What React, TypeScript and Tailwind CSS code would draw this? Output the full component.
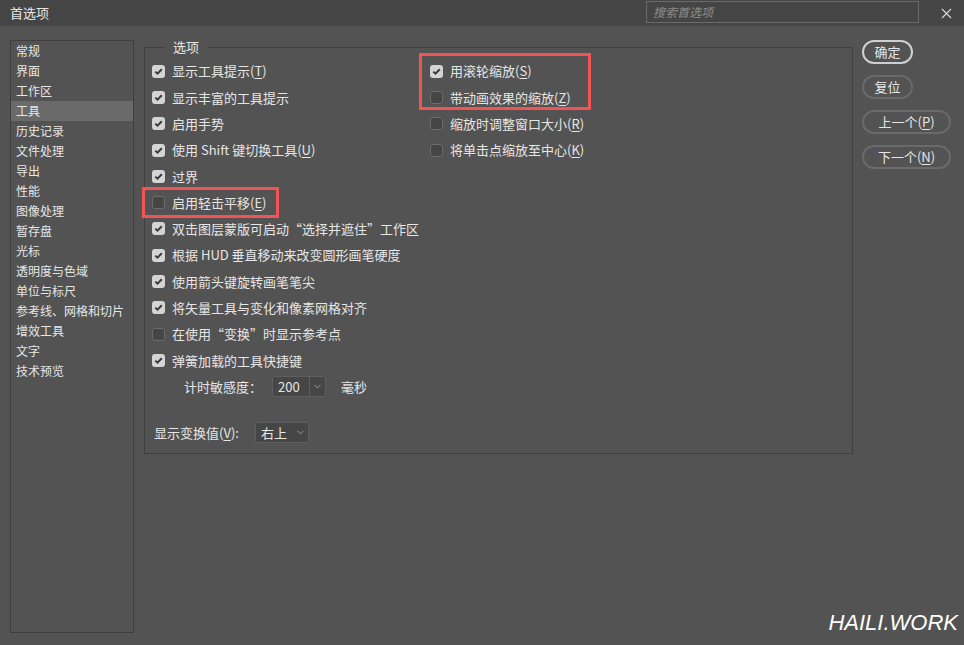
import { X, ChevronDown } from "lucide-react";

const sideItems = [
  "常规",
  "界面",
  "工作区",
  "工具",
  "历史记录",
  "文件处理",
  "导出",
  "性能",
  "图像处理",
  "暂存盘",
  "光标",
  "透明度与色域",
  "单位与标尺",
  "参考线、网格和切片",
  "增效工具",
  "文字",
  "技术预览",
];

type Opt = { label: string; key?: string; on: boolean; mark?: boolean };

const leftOpts: Opt[] = [
  { label: "显示工具提示", key: "T", on: true },
  { label: "显示丰富的工具提示", on: true },
  { label: "启用手势", on: true },
  { label: "使用 Shift 键切换工具", key: "U", on: true },
  { label: "过界", on: true },
  { label: "启用轻击平移", key: "E", on: false, mark: true },
  { label: "双击图层蒙版可启动“选择并遮住”工作区", on: true },
  { label: "根据 HUD 垂直移动来改变圆形画笔硬度", on: true },
  { label: "使用箭头键旋转画笔笔尖", on: true },
  { label: "将矢量工具与变化和像素网格对齐", on: true },
  { label: "在使用“变换”时显示参考点", on: false },
  { label: "弹簧加载的工具快捷键", on: true },
];

const rightOpts: Opt[] = [
  { label: "用滚轮缩放", key: "S", on: true },
  { label: "带动画效果的缩放", key: "Z", on: false },
  { label: "缩放时调整窗口大小", key: "R", on: false },
  { label: "将单击点缩放至中心", key: "K", on: false },
];

function Box({ on }: { on: boolean }) {
  if (on)
    return (
      <span className="flex items-center justify-center w-[13px] h-[13px] rounded-[3px] bg-[#d4d4d4] shrink-0">
        <svg width="9" height="9" viewBox="0 0 9 9">
          <path d="M1.3 4.6 L3.5 6.7 L7.8 2.2" stroke="#3a3a3a" strokeWidth="2" fill="none" />
        </svg>
      </span>
    );
  return <span className="w-[13px] h-[13px] rounded-[3px] bg-[#454545] border border-[#6c6c6c] shrink-0" />;
}

function Key({ k }: { k?: string }) {
  if (!k) return null;
  return (
    <span>
      (<span className="underline underline-offset-2">{k}</span>)
    </span>
  );
}

function Row({ o }: { o: Opt }) {
  return (
    <div className="relative flex items-center gap-[7px] h-[26.3px]">
      <Box on={o.on} />
      <span className="whitespace-nowrap">
        {o.label}
        <Key k={o.key} />
      </span>
      {o.mark && (
        <div className="absolute left-[-10px] top-[-2px] w-[137px] h-[31px] border-[3px] border-[#f25454]" />
      )}
    </div>
  );
}

function Drop({ value, w, split }: { value: string; w: string; split?: boolean }) {
  return (
    <div className={`flex items-center h-[21px] ${w} bg-[#464646] border border-[#5e5e5e] rounded-[2px]`}>
      <span className="flex-1 pl-[5px] leading-none">{value}</span>
      {split && <span className="w-px h-full bg-[#5e5e5e]" />}
      <span className="w-[15px] flex justify-center">
        <ChevronDown size={11} strokeWidth={1.6} className="text-[#b8b8b8]" />
      </span>
    </div>
  );
}

export default function App() {
  return (
    <div
      className="relative w-[964px] h-[645px] overflow-hidden bg-[#535353] text-[#e6e6e6] text-[13px]"
      style={{ fontFamily: '"Noto Sans CJK SC", "Noto Sans", sans-serif' }}
    >
      <div className="flex items-center h-[26px] bg-[#454545] pl-[10px] pr-[9px]">
        <span className="flex-1 text-[13px]">首选项</span>
        <div className="flex items-center w-[273px] h-[22px] border border-[#6a6a6a] pl-[6px] mt-[-2px]">
          <span className="italic text-[12px] text-[#8d8d8d]">搜索首选项</span>
        </div>
        <X size={17} strokeWidth={1.6} className="ml-[19px] text-[#dcdcdc]" />
      </div>

      <div className="flex pt-[14px] pl-[10px]">
        <div className="w-[124px] h-[593px] border border-[#3e3e3e] text-[12px]">
          {sideItems.map((s) => (
            <div
              key={s}
              className={`h-[20px] pl-[5px] flex items-center ${s === "工具" ? "bg-[#6a6a6a]" : ""}`}
            >
              {s}
            </div>
          ))}
        </div>

        <fieldset className="ml-[10px] w-[709px] h-[414px] border border-[#3f3f3f] pl-[7px] pt-[4px]">
          <legend className="ml-[13px] px-[8px] leading-[14px]">选项</legend>
          <div className="flex">
            <div className="w-[278px]">
              {leftOpts.map((o) => (
                <Row key={o.label} o={o} />
              ))}
              <div className="flex items-center h-[26.3px] pl-[32px]">
                <span className="w-[88px]">计时敏感度：</span>
                <Drop value="200" w="w-[54px]" split />
                <span className="ml-[15px]">毫秒</span>
              </div>
            </div>
            <div className="relative">
              {rightOpts.map((o) => (
                <Row key={o.label} o={o} />
              ))}
              <div className="absolute left-[-11px] top-[-5px] w-[172px] h-[57px] border-[3px] border-[#f25454]" />
            </div>
          </div>
          <div className="flex items-center mt-[22px] h-[22px] pl-[2px]">
            <span className="w-[101px]">
              显示变换值<Key k="V" />:
            </span>
            <Drop value="右上" w="w-[54px]" />
          </div>
        </fieldset>

        <div className="ml-[9px] flex flex-col gap-[11px]">
          <button className="w-[51px] h-[24px] rounded-full border-2 border-[#cfcfcf] text-[13px]">确定</button>
          <button className="w-[51px] h-[24px] rounded-full border-2 border-[#6a6a6a] text-[13px]">复位</button>
          <button className="w-[89px] h-[24px] rounded-full border-2 border-[#6a6a6a] text-[13px]">
            上一个<Key k="P" />
          </button>
          <button className="w-[89px] h-[24px] rounded-full border-2 border-[#6a6a6a] text-[13px]">
            下一个<Key k="N" />
          </button>
        </div>
      </div>

      <div
        className="absolute right-[6px] bottom-[11px] italic text-[22px] leading-none text-white"
        style={{ fontFamily: '"Liberation Sans", sans-serif' }}
      >
        HAILI.WORK
      </div>
    </div>
  );
}
